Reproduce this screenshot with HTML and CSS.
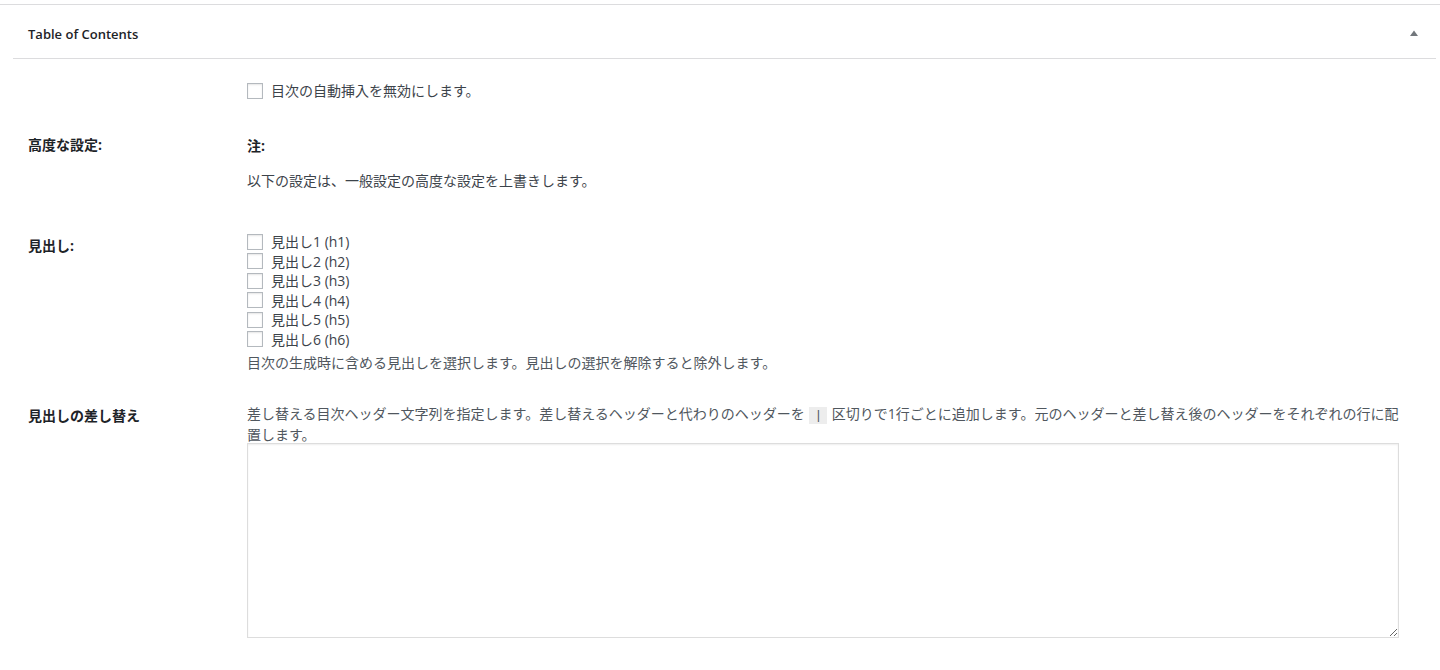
FILE: index.html
```html
<!DOCTYPE html>
<html lang="ja">
<head>
<meta charset="utf-8">
<title>Table of Contents</title>
<link rel="stylesheet" href="styles.css">
</head>
<body>
<div class="topline"></div>
<div class="postbox">
  <div class="postbox-header">
    <h2 class="title">Table of Contents</h2>
    <span class="toggle"><svg width="8" height="6" viewBox="0 0 8 6"><path d="M0 6 L4 0.5 L8 6 Z" fill="#72777c"/></svg></span>
  </div>
  <div class="inside">
    <div class="row">
      <div class="th"></div>
      <div class="td">
        <label class="cb"><input type="checkbox" class="box">目次の自動挿入を無効にします。</label>
      </div>
    </div>
    <div class="row">
      <div class="th">高度な設定:</div>
      <div class="td">
        <p class="note"><strong>注:</strong></p>
        <p class="note-text">以下の設定は、一般設定の高度な設定を上書きします。</p>
      </div>
    </div>
    <div class="row">
      <div class="th">見出し:</div>
      <div class="td">
        <label class="cb"><input type="checkbox" class="box">見出し1 (h1)</label>
        <label class="cb"><input type="checkbox" class="box">見出し2 (h2)</label>
        <label class="cb"><input type="checkbox" class="box">見出し3 (h3)</label>
        <label class="cb"><input type="checkbox" class="box">見出し4 (h4)</label>
        <label class="cb"><input type="checkbox" class="box">見出し5 (h5)</label>
        <label class="cb"><input type="checkbox" class="box">見出し6 (h6)</label>
        <p class="description">目次の生成時に含める見出しを選択します。見出しの選択を解除すると除外します。</p>
      </div>
    </div>
    <div class="row">
      <div class="th">見出しの差し替え</div>
      <div class="td">
        <p class="description replace">差し替える目次ヘッダー文字列を指定します。差し替えるヘッダーと代わりのヘッダーを <code>|</code> 区切りで1行ごとに追加します。元のヘッダーと差し替え後のヘッダーをそれぞれの行に配置します。</p>
        <textarea class="textarea"></textarea>
      </div>
    </div>
  </div>
</div>
</body>
</html>
```

FILE: styles.css
```css
html, body {
  margin: 0;
  padding: 0;
  background: #ffffff;
}
body {
  font-family: "Open Sans", "Noto Sans CJK JP", sans-serif;
  font-size: 14px;
  line-height: 19.5px;
  color: #3c434a;
}
.topline {
  height: 4px;
  border-bottom: 1px solid #dcdcde;
}
.postbox {
  margin: 0 4px 0 13px;
}
.postbox-header {
  height: 54px;
  border-bottom: 1px solid #dcdcde;
  display: flex;
  align-items: flex-start;
  justify-content: space-between;
  box-sizing: border-box;
  padding: 19px 18px 0 15px;
}
.title {
  margin: 0;
  font-size: 13px;
  font-weight: 600;
  line-height: 20px;
  color: #1d2327;
}
.toggle {
  display: flex;
  padding-top: 6px;
}
.inside {
  padding: 7px 28px 0 15px;
}
.row {
  display: flex;
  align-items: flex-start;
  padding: 15px 0;
}
.th {
  width: 219px;
  flex: none;
  padding-top: 4px;
  font-weight: 700;
  color: #1d2327;
}
.td {
  flex: 1;
  min-width: 0;
}
.cb {
  display: flex;
  align-items: center;
  height: 19.5px;
}
.box {
  -webkit-appearance: none;
  appearance: none;
  width: 16px;
  height: 16px;
  margin: 0 8px 0 0;
  border: 1px solid #b4b9be;
  border-radius: 0;
  box-shadow: inset 0 1px 2px rgba(0, 0, 0, 0.1);
  background: #fff;
  box-sizing: border-box;
  flex: none;
}
p {
  margin: 0;
}
.note {
  margin-top: 5px;
  color: #1d2327;
}
.note-text {
  margin: 15.5px 0 12px;
}
.description {
  margin-top: 3.5px;
  color: #50575e;
}
.description.replace {
  margin-top: 1.5px;
  line-height: 19px;
}
code {
  font-family: "Liberation Mono", monospace;
  font-size: 13px;
  padding: 1px 5px 1px;
  margin: 0 1px;
  background: rgba(0, 0, 0, 0.07);
}
.textarea {
  display: block;
  width: 1152px;
  height: 195px;
  box-sizing: border-box;
  margin: -1px 0 0;
  border: 1px solid #dddddd;
  box-shadow: inset 0 1px 2px rgba(0, 0, 0, 0.07);
  border-radius: 0;
  background: #fff;
  font-family: inherit;
  font-size: 14px;
}
```
